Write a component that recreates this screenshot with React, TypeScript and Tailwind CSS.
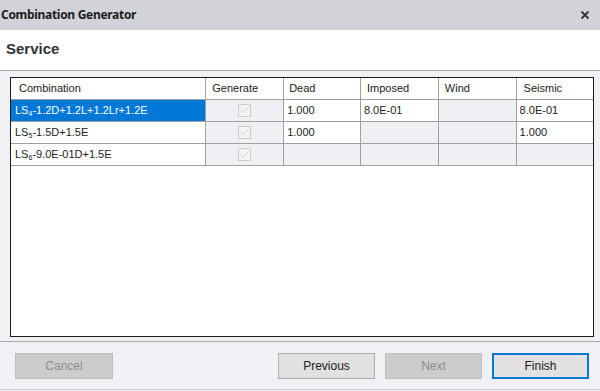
import { Check } from 'lucide-react';

interface Row {
    prefix: string;
    sub: string;
    rest: string;
    dead: string;
    imposed: string;
    wind: string;
    seismic: string;
}

const rows: Row[] = [
    { prefix: 'LS', sub: '4', rest: '-1.2D+1.2L+1.2Lr+1.2E', dead: '1.000', imposed: '8.0E-01', wind: '', seismic: '8.0E-01' },
    { prefix: 'LS', sub: '5', rest: '-1.5D+1.5E', dead: '1.000', imposed: '', wind: '', seismic: '1.000' },
    { prefix: 'LS', sub: '6', rest: '-9.0E-01D+1.5E', dead: '', imposed: '', wind: '', seismic: '' },
];

const cellCls = (value: string) =>
    value ? 'bg-white' : 'bg-[#f0f0f4]';

const App = () => {
    return (
        <div className="w-[600px] h-[391px] flex flex-col bg-[#f1f1f5] overflow-hidden" style={{ fontFamily: '"Liberation Sans", Arial, sans-serif' }}>
            {/* Title bar */}
            <div className="h-[30px] shrink-0 bg-[#d2d3d8] flex items-center justify-between pl-[1px] pr-[10px]">
                <span className="text-[12px] font-bold text-[#1b1b1b] tracking-[-0.3px]" style={{ fontFamily: '"Noto Sans", sans-serif' }}>Combination Generator</span>
                <svg width="10" height="10" viewBox="0 0 10 10" className="text-[#333]">
                    <path d="M1.5 1.5 L8.5 8.5 M8.5 1.5 L1.5 8.5" stroke="currentColor" strokeWidth="1.8" />
                </svg>
            </div>

            {/* Page header */}
            <div className="h-[41px] shrink-0 bg-white border-b border-[#a9a9a9] flex items-center pl-[6px] pb-[2px]">
                <span className="text-[15px] font-bold text-[#333]">Service</span>
            </div>

            {/* Grid area */}
            <div className="flex-1 pt-[6px] pl-[10px] pr-[6px] pb-[4px]">
                <div className="h-full border border-[#1a1a1a] bg-white">
                    <table className="border-collapse text-[11px] text-[#222] table-fixed">
                        <colgroup>
                            <col className="w-[195px]" />
                            <col className="w-[78px]" />
                            <col className="w-[77px]" />
                            <col className="w-[78px]" />
                            <col className="w-[78px]" />
                            <col className="w-[77px]" />
                        </colgroup>
                        <thead>
                            <tr className="h-[21px]">
                                <th className="font-normal text-left pl-[8px] border-b border-r border-[#a0a0a0]">Combination</th>
                                <th className="font-normal text-left pl-[6px] border-b border-r border-[#a0a0a0]">Generate</th>
                                <th className="font-normal text-left pl-[5px] border-b border-r border-[#a0a0a0]">Dead</th>
                                <th className="font-normal text-left pl-[6px] border-b border-r border-[#a0a0a0]">Imposed</th>
                                <th className="font-normal text-left pl-[6px] border-b border-r border-[#a0a0a0]">Wind</th>
                                <th className="font-normal text-left pl-[7px] border-b border-[#a0a0a0]">Seismic</th>
                            </tr>
                        </thead>
                        <tbody>
                            {rows.map((r, i) => (
                                <tr key={i} className="h-[22px]">
                                    <td className={`pl-[4px] border-b border-r border-[#a0a0a0] whitespace-nowrap ${i === 0 ? 'bg-[#0078d7] text-white' : 'bg-white'}`}>
                                        {r.prefix}<sub className="text-[7px]">{r.sub}</sub>{r.rest}
                                    </td>
                                    <td className="border-b border-r border-[#a0a0a0] bg-[#f0f0f4]">
                                        <div className="flex justify-center">
                                            <div className="w-[13px] h-[13px] border border-[#cccccc] bg-[#f4f4f4] flex items-center justify-center">
                                                <Check size={11} strokeWidth={1.5} className="text-[#bdbdbd]" />
                                            </div>
                                        </div>
                                    </td>
                                    <td className={`pl-[3px] border-b border-r border-[#a0a0a0] ${cellCls(r.dead)}`}>{r.dead}</td>
                                    <td className={`pl-[3px] border-b border-r border-[#a0a0a0] ${cellCls(r.imposed)}`}>{r.imposed}</td>
                                    <td className={`pl-[3px] border-b border-r border-[#a0a0a0] ${cellCls(r.wind)}`}>{r.wind}</td>
                                    <td className={`pl-[3px] border-b border-[#a0a0a0] ${cellCls(r.seismic)}`}>{r.seismic}</td>
                                </tr>
                            ))}
                        </tbody>
                    </table>
                </div>
            </div>

            {/* Footer */}
            <div className="h-[48px] shrink-0 border-t border-[#a9a9a9] flex items-start pt-[11px] pl-[15px] pr-[11px] text-[12px]">
                <button className="w-[98px] h-[26px] bg-[#cccccc] border border-[#bfbfbf] text-[#8d8d8d]">Cancel</button>
                <div className="flex-1" />
                <button className="w-[97px] h-[26px] bg-[#e1e1e1] border border-[#adadad] text-[#1b1b1b]">Previous</button>
                <button className="ml-[10px] w-[97px] h-[26px] bg-[#cccccc] border border-[#bfbfbf] text-[#8d8d8d]">Next</button>
                <button className="ml-[10px] w-[97px] h-[26px] bg-[#e1e1e1] border-2 border-[#0078d7] text-[#1b1b1b]">Finish</button>
            </div>
            <div className="h-[2px] shrink-0 border-t border-[#d0d0d0]" />
        </div>
    );
};

export default App;
